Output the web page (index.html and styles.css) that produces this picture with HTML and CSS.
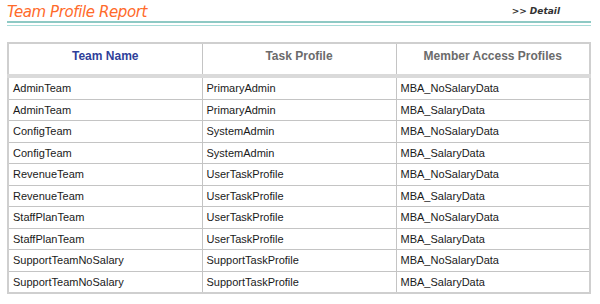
FILE: index.html
```html
<!DOCTYPE html>
<html lang="en">
<head>
    <meta charset="UTF-8">
    <title>Team Profile Report</title>
    <link rel="stylesheet" href="styles.css">
</head>
<body>
    <div class="report">
        <div class="report-head">
            <span class="report-title">Team Profile Report</span>
            <a href="#" class="detail-link">&gt;&gt; Detail</a>
        </div>
        <div class="rule"></div>

        <table class="profiles-table">
            <thead>
                <tr>
                    <th class="primary">Team Name</th>
                    <th>Task Profile</th>
                    <th>Member Access Profiles</th>
                </tr>
            </thead>
            <tbody>
                <tr><td>AdminTeam</td><td>PrimaryAdmin</td><td>MBA_NoSalaryData</td></tr>
                <tr><td>AdminTeam</td><td>PrimaryAdmin</td><td>MBA_SalaryData</td></tr>
                <tr><td>ConfigTeam</td><td>SystemAdmin</td><td>MBA_NoSalaryData</td></tr>
                <tr><td>ConfigTeam</td><td>SystemAdmin</td><td>MBA_SalaryData</td></tr>
                <tr><td>RevenueTeam</td><td>UserTaskProfile</td><td>MBA_NoSalaryData</td></tr>
                <tr><td>RevenueTeam</td><td>UserTaskProfile</td><td>MBA_SalaryData</td></tr>
                <tr><td>StaffPlanTeam</td><td>UserTaskProfile</td><td>MBA_NoSalaryData</td></tr>
                <tr><td>StaffPlanTeam</td><td>UserTaskProfile</td><td>MBA_SalaryData</td></tr>
                <tr><td>SupportTeamNoSalary</td><td>SupportTaskProfile</td><td>MBA_NoSalaryData</td></tr>
                <tr><td>SupportTeamNoSalary</td><td>SupportTaskProfile</td><td>MBA_SalaryData</td></tr>
            </tbody>
        </table>
    </div>
</body>
</html>
```

FILE: styles.css
```css
body {
    margin: 0;
    background: #fff;
    font-family: 'Liberation Sans', Arial, sans-serif;
    font-size: 11px;
    color: #111;
}

.report {
    padding: 0 9px 0 7px;
}

.report-head {
    display: flex;
    justify-content: space-between;
    align-items: flex-end;
    height: 21px;
}

.report-title {
    font-family: 'DejaVu Sans', sans-serif;
    font-style: italic;
    font-size: 15px;
    color: #ff6a2a;
    letter-spacing: -0.4px;
    line-height: 18px;
}

.detail-link {
    font-family: 'DejaVu Sans', sans-serif;
    font-size: 9px;
    font-style: italic;
    font-weight: bold;
    color: #333;
    text-decoration: none;
    margin-right: 31px;
    margin-bottom: 5px;
}

.rule {
    height: 2px;
    border-top: 2px solid #8ec9c4;
    border-bottom: 1px solid #a8dcd8;
}

.profiles-table {
    width: 584px;
    margin-top: 16px;
    border-collapse: collapse;
    border: 2px solid #cfcfcf;
}

.profiles-table th,
.profiles-table td {
    border: 1px solid #c4c4c4;
    text-align: left;
    width: 33.33%;
}

.profiles-table th {
    height: 25px;
    padding: 5px 4px 0;
    vertical-align: top;
    text-align: center;
    font-size: 12px;
    font-weight: bold;
    color: #6b6b6b;
    border-bottom: 4px solid #dadada;
}

.profiles-table th.primary {
    color: #2f3f9a;
}

.profiles-table td {
    height: 20.5px;
    padding: 0 4px;
    line-height: 14px;
    color: #1a1a1a;
}
```
